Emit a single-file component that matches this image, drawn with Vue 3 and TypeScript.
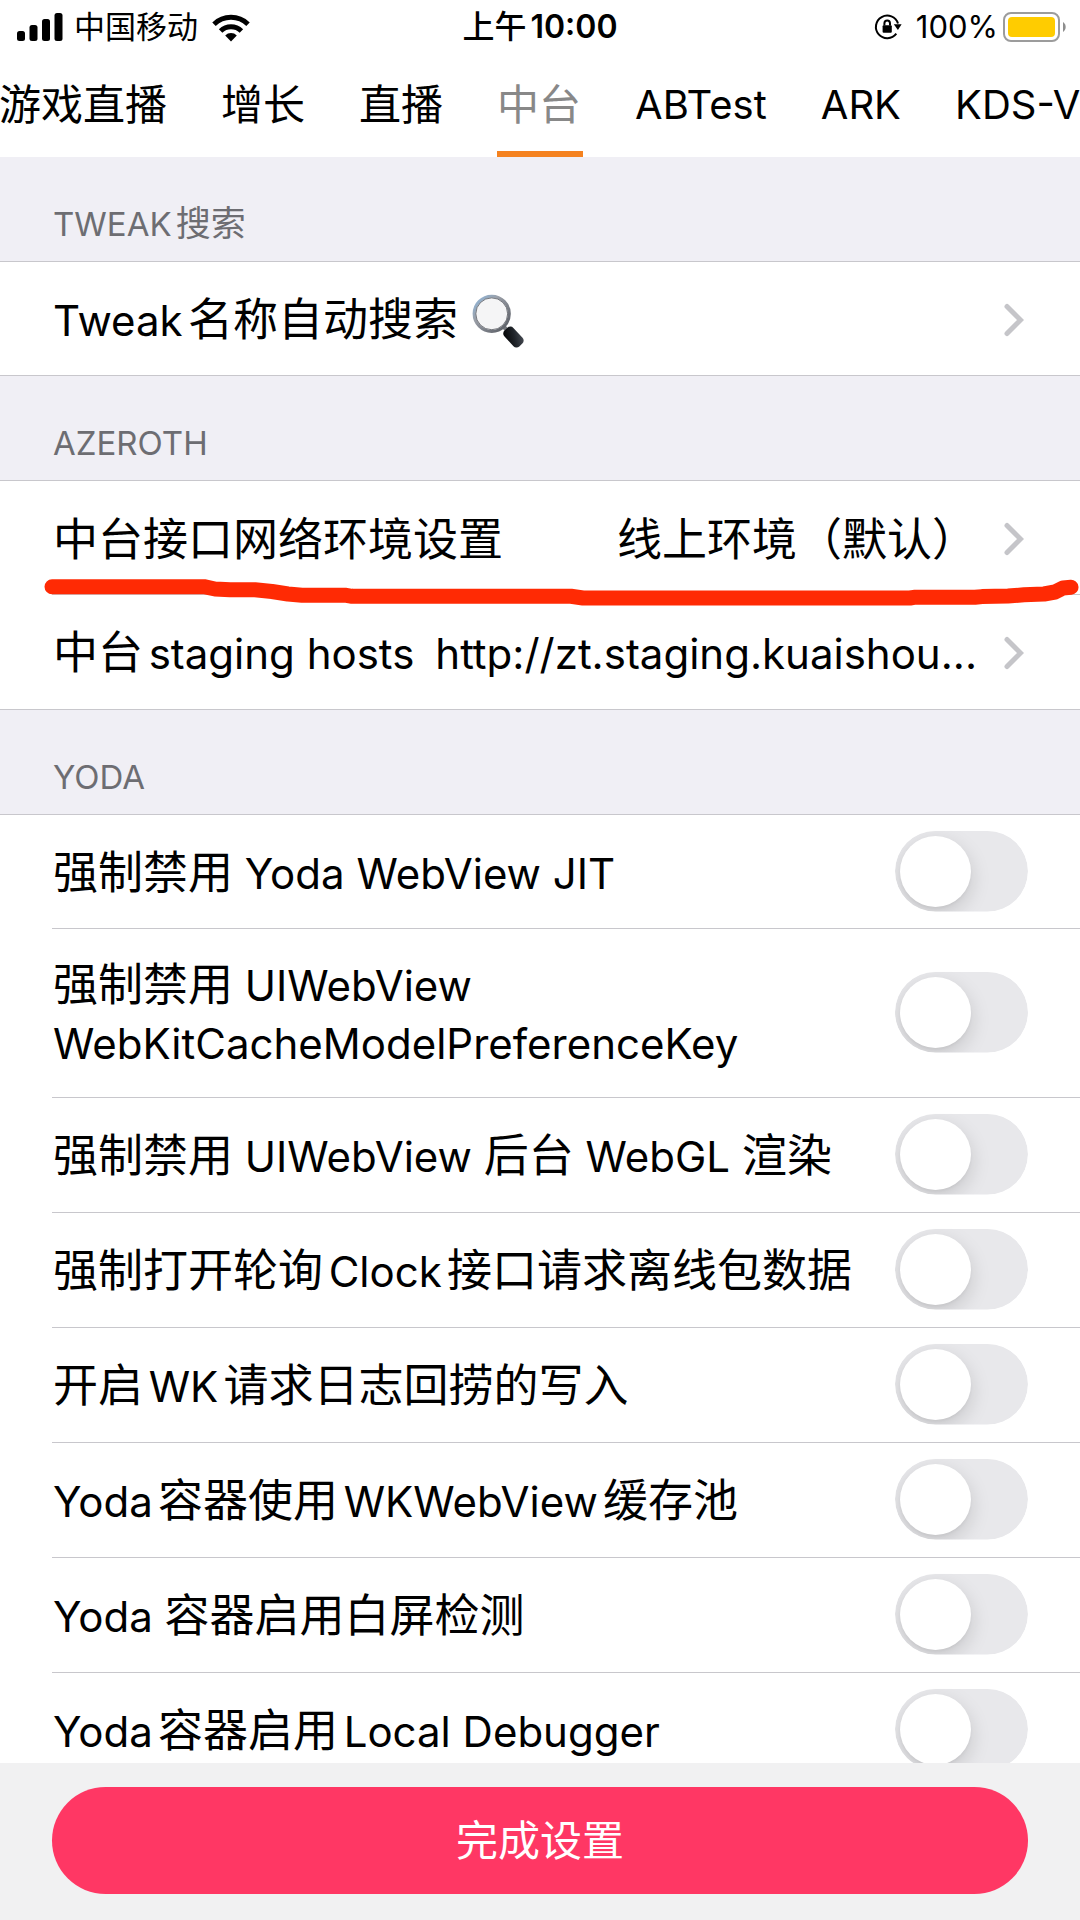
<script setup lang="ts">
import { reactive } from 'vue'

interface Run {
  text: string
  latin: boolean
}

interface LinkRow {
  id: string
  label: string
  value?: string
  search?: boolean
}

interface LinkGroup {
  title: string
  marked?: boolean
  rows: LinkRow[]
}

interface SwitchRow {
  id: string
  label: string
  on: boolean
}

const tabs: string[] = ['游戏直播', '增长', '直播', '中台', 'ABTest', 'ARK', 'KDS-V']
const activeTab = '中台'

const linkGroups: LinkGroup[] = [
  {
    title: 'TWEAK搜索',
    rows: [{ id: 'search', label: 'Tweak名称自动搜索', search: true }],
  },
  {
    title: 'AZEROTH',
    marked: true,
    rows: [
      { id: 'env', label: '中台接口网络环境设置', value: '线上环境（默认）' },
      { id: 'hosts', label: '中台staging hosts', value: 'http://zt.staging.kuaishou...' },
    ],
  },
]

const switches = reactive<SwitchRow[]>([
  { id: 'jit', label: '强制禁用 Yoda WebView JIT', on: false },
  { id: 'cache', label: '强制禁用 UIWebView WebKitCacheModelPreferenceKey', on: false },
  { id: 'webgl', label: '强制禁用 UIWebView 后台 WebGL 渲染', on: false },
  { id: 'clock', label: '强制打开轮询Clock接口请求离线包数据', on: false },
  { id: 'log', label: '开启WK请求日志回捞的写入', on: false },
  { id: 'pool', label: 'Yoda容器使用WKWebView缓存池', on: false },
  { id: 'blank', label: 'Yoda 容器启用白屏检测', on: false },
  { id: 'debugger', label: 'Yoda容器启用Local Debugger', on: false },
])

// Latin words are set smaller than the Chinese text around them.
function runs(text: string): Run[] {
  const parts = text.match(/ *[\x21-\x7e]+ *|[^\x20-\x7e]+/g) ?? []
  return parts.map((part) => ({ text: part, latin: /^[\x20-\x7e]/.test(part) }))
}
</script>

<template>
  <div class="screen">
    <header class="status">
      <div class="status-left">
        <svg class="signal" width="46" height="28" viewBox="0 0 46 28" aria-hidden="true">
          <rect x="0" y="18" width="8" height="10" rx="2.5" />
          <rect x="12.5" y="12" width="8" height="16" rx="2.5" />
          <rect x="25" y="6" width="8" height="22" rx="2.5" />
          <rect x="37.5" y="0" width="8" height="28" rx="2.5" />
        </svg>
        <span class="status-text">中国移动</span>
        <svg class="wifi" width="40" height="29" viewBox="0 0 40 29" aria-hidden="true">
          <path d="M3 11.2 A24.5 24.5 0 0 1 37 11.2" />
          <path d="M9.6 18 A15 15 0 0 1 30.4 18" />
          <path class="fill" d="M20 28.5 L14.2 22.4 A8.4 8.4 0 0 1 25.8 22.4 Z" />
        </svg>
      </div>
      <div class="status-time">上午<span class="digits">10:00</span></div>
      <div class="status-right">
        <svg class="lock" width="28" height="28" viewBox="0 0 28 28" aria-hidden="true">
          <path d="M22.3 20.6 A11.3 11.3 0 1 1 24 10.5" />
          <path class="fill" d="M19.8 11.2 H27.6 L23.9 17 Z" />
          <rect class="fill" x="8.6" y="12.3" width="9.2" height="7.4" rx="1" />
          <path class="shackle" d="M10.4 12.6 V10.4 A2.8 2.8 0 0 1 16 10.4 V12.6" />
        </svg>
        <span class="digits">100%</span>
        <svg class="battery" width="64" height="30" viewBox="0 0 64 30" aria-hidden="true">
          <rect x="1" y="1" width="55" height="28" rx="7" fill="#fff" stroke="#9c9c9c" stroke-width="2" />
          <rect x="5" y="5" width="47" height="20" rx="4" fill="#ffcc00" />
          <path d="M60 10 A6 6 0 0 1 60 20 Z" fill="#8e8e8e" />
        </svg>
      </div>
    </header>

    <nav class="tabs">
      <a
        v-for="tab in tabs"
        :key="tab"
        href="#"
        class="tab"
        :class="{ active: tab === activeTab }"
        @click.prevent
      ><span v-for="(run, i) in runs(tab)" :key="i" :class="{ latin: run.latin }">{{ run.text }}</span></a>
    </nav>

    <main class="list">
      <section v-for="group in linkGroups" :key="group.title" class="group">
        <h2 class="title"><span v-for="(run, i) in runs(group.title)" :key="i" :class="{ latin: run.latin }">{{ run.text }}</span></h2>
        <div class="rows">
          <a v-for="row in group.rows" :key="row.id" href="#" class="row" @click.prevent>
            <span class="label"><span v-for="(run, i) in runs(row.label)" :key="i" :class="{ latin: run.latin }">{{ run.text }}</span></span>
            <svg v-if="row.search" class="glass" width="62" height="62" viewBox="0 0 60 60" aria-hidden="true">
              <defs>
                <linearGradient id="rim" x1="0" y1="0" x2="1" y2="1">
                  <stop offset="0" stop-color="#8fb8de" />
                  <stop offset="0.35" stop-color="#9a9fa8" />
                  <stop offset="1" stop-color="#55585f" />
                </linearGradient>
                <linearGradient id="grip" x1="0" y1="1" x2="1" y2="0">
                  <stop offset="0" stop-color="#000" />
                  <stop offset="0.55" stop-color="#20242a" />
                  <stop offset="1" stop-color="#4a4f57" />
                </linearGradient>
              </defs>
              <path d="M32 35 L37 40" stroke="#77797e" stroke-width="4" />
              <circle cx="22" cy="24" r="17" fill="#f5f5f6" stroke="url(#rim)" stroke-width="3" />
              <circle cx="22" cy="24" r="15.4" fill="none" stroke="#5f6167" stroke-width="0.8" />
              <rect x="-10.5" y="-6" width="21" height="12" rx="4" fill="url(#grip)" transform="translate(43 46.5) rotate(47)" />
            </svg>
            <span class="value" :class="{ latin: runs(row.value ?? '')[0]?.latin }">{{ row.value }}</span>
            <svg class="chevron" width="20" height="34" viewBox="0 0 20 34" aria-hidden="true">
              <path d="M3 3.5 L16.5 17 L3 30.5" />
            </svg>
          </a>
          <svg v-if="group.marked" class="marker" viewBox="0 0 1080 40" preserveAspectRatio="none" aria-hidden="true">
            <path d="M52 15.7 H204 L215 18 L230 18.8 H255 L272 20.5 L288 23 L302 24.2 H345 L352 25.3 H571 L583 27 H910 L914 26.3 H975 L982 25.6 L1008 25 L1024 23.8 L1044 23 L1055 21 L1063 17 L1071 16.3" />
          </svg>
        </div>
      </section>

      <section class="group">
        <h2 class="title"><span class="latin">YODA</span></h2>
        <div class="rows">
          <label v-for="item in switches" :key="item.id" class="row">
            <span class="label"><span v-for="(run, i) in runs(item.label)" :key="i" :class="{ latin: run.latin }">{{ run.text }}</span></span>
            <input v-model="item.on" type="checkbox" role="switch" class="switch" />
          </label>
        </div>
      </section>
    </main>

    <footer class="footer">
      <button type="button" class="done">完成设置</button>
    </footer>
  </div>
</template>

<style>
body {
  margin: 0;
}
</style>

<style scoped>
.screen {
  display: flex;
  flex-direction: column;
  height: 100vh;
  overflow: hidden;
  background: #fff;
  color: #000;
  font-family: Inter, "Noto Sans CJK SC", sans-serif;
  font-size: 45px;
  line-height: 57px;
  text-autospace: normal;
}

.screen * {
  box-sizing: border-box;
}

a {
  color: inherit;
  text-decoration: none;
}

/* status bar */
.status {
  flex: none;
  display: grid;
  grid-template-columns: 1fr auto 1fr;
  align-items: center;
  height: 54px;
  padding: 0 13px;
  font-size: 31px;
  line-height: 36px;
}

.status-left,
.status-right {
  display: flex;
  align-items: center;
}

.status-left {
  padding-left: 4px;
}

.status-right {
  justify-content: flex-end;
}

.status-text {
  margin: 0 13px 0 11px;
}

.status-time {
  font-size: 32px;
  font-weight: 500;
}

.status-time .digits {
  font-weight: 600;
}

.wifi path,
.lock path {
  fill: none;
  stroke: #000;
  stroke-width: 5;
}

.lock path {
  stroke-width: 2;
}

.wifi .fill,
.lock .fill {
  fill: #000;
  stroke: none;
}

.lock {
  margin-right: 14px;
}

.battery {
  margin-left: 5px;
}

/* tabs */
.tabs {
  flex: none;
  display: flex;
  gap: 54px;
  height: 103px;
  margin-left: -1px;
  overflow: hidden;
  font-size: 42px;
  white-space: nowrap;
}

.tab {
  position: relative;
  flex: none;
  display: flex;
  align-items: center;
  padding-bottom: 3px;
}

.tab .latin {
  font-size: 40px;
}

.tab.active {
  color: #888;
}

.tab.active::after {
  content: "";
  position: absolute;
  left: 0;
  right: -2px;
  bottom: 0;
  height: 6px;
  background: #f5821f;
}

/* list */
.list {
  flex: 1;
  min-height: 0;
  overflow: hidden;
}

.title {
  height: 105px;
  margin: 0;
  padding: 28px 53px 0;
  border-bottom: 1px solid #c8c7cc;
  background: #f0eff5;
  color: #6d6d72;
  font-size: 35px;
  font-weight: 400;
  line-height: 76px;
}

.title .latin {
  font-size: 33px;
}

.group + .group .title {
  height: 106px;
  border-top: 1px solid #c8c7cc;
}

.rows {
  position: relative;
}

.row {
  position: relative;
  display: flex;
  align-items: center;
  min-height: 113px;
  padding: 28px 52px 25px 53px;
}

.row + .row {
  min-height: 115px;
}

.row + .row::before {
  content: "";
  position: absolute;
  top: 0;
  left: 52px;
  right: 0;
  height: 1px;
  background: #c8c7cc;
}

.label {
  flex: none;
  max-width: 820px;
}

.label .latin,
.value.latin {
  font-size: 42px;
}

.value {
  flex: 1;
  min-width: 0;
  margin-left: 12px;
  overflow: hidden;
  text-align: right;
  text-overflow: ellipsis;
  white-space: nowrap;
}

.glass {
  flex: none;
  margin: -4px 0 -4px 11px;
}

.chevron {
  flex: none;
  margin: 0 4px 0 27px;
}

.chevron path {
  fill: none;
  stroke: #c5c5c9;
  stroke-width: 5;
  stroke-linecap: round;
}

.marker {
  position: absolute;
  top: 90px;
  left: 0;
  width: 100%;
  height: 40px;
}

.marker path {
  fill: none;
  stroke: #ff2a04;
  stroke-width: 15;
  stroke-linecap: round;
  stroke-linejoin: round;
}

/* switch */
.switch {
  appearance: none;
  flex: none;
  width: 133px;
  height: 81px;
  margin: -16px 0 -12px auto;
  padding: 5px;
  border-radius: 41px;
  background: #e8e8eb;
  clip-path: inset(0 round 41px);
}

.switch::before {
  content: "";
  display: block;
  width: 71px;
  height: 71px;
  border-radius: 50%;
  background: #fff;
  box-shadow: 0 7px 20px rgba(0, 0, 0, 0.15), 0 2px 3px rgba(0, 0, 0, 0.04);
}

.switch:checked {
  background: #34c759;
}

.switch:checked::before {
  margin-left: auto;
}

/* footer */
.footer {
  flex: none;
  padding: 24px 52px 26px;
  background: #f1f1f2;
}

.done {
  display: block;
  width: 100%;
  height: 107px;
  padding: 0;
  border: 0;
  border-radius: 54px;
  background: #ff3764;
  color: #fff;
  font: inherit;
  font-size: 42px;
}
</style>
